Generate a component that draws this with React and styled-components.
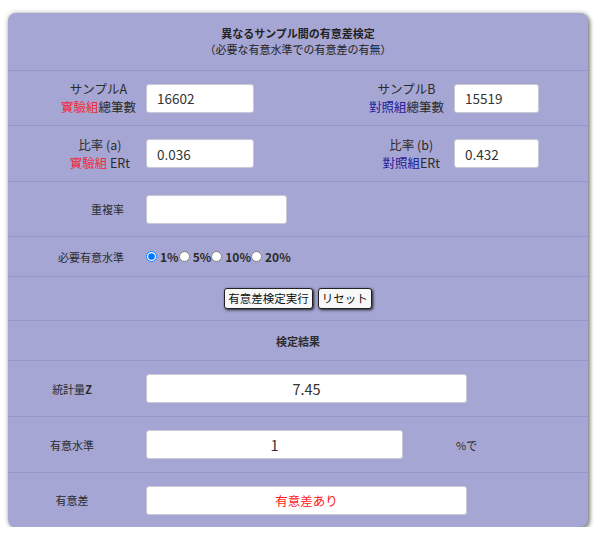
import React from "react";
import styled, { createGlobalStyle } from "styled-components";

const Global = createGlobalStyle`
  html, body { margin: 0; padding: 0; background: #ffffff; }
  body { font-family: "Noto Sans CJK JP", "Noto Sans", sans-serif; color: #2b2b2b; }
  * { box-sizing: border-box; }
`;

const Page = styled.div`
  padding: 13px 0 0 8px;
`;

const Card = styled.div`
  width: 580px;
  height: 514px;
  background: #a6a6d4;
  border-radius: 8px;
  box-shadow: 0 0 5px rgba(0, 0, 0, 0.25), 2px 2px 4px rgba(0, 0, 0, 0.45);
  overflow: hidden;
  display: flex;
  flex-direction: column;
`;

const Header = styled.div`
  height: 57px;
  padding-top: 12px;
  text-align: center;
  line-height: 16px;
  font-size: 11px;
  color: #222;
`;

const Title = styled.div`
  font-weight: bold;
`;

const Row = styled.div`
  height: ${(p) => p.$h}px;
  border-top: 1px solid #9898c8;
  display: flex;
  align-items: center;
  justify-content: ${(p) => (p.$center ? "center" : "flex-start")};
`;

const LabelCell = styled.div`
  width: ${(p) => p.$w}px;
  flex: none;
  display: flex;
  justify-content: ${(p) => (p.$align === "center" ? "center" : "flex-end")};
  padding-right: ${(p) => p.$pr}px;
  font-size: ${(p) => p.$fs || 11}px;
  font-weight: ${(p) => (p.$bold ? "bold" : "normal")};
  line-height: ${(p) => p.$lh || 16}px;
  text-align: center;
`;

const Red = styled.span`
  color: #f2283c;
`;

const Blue = styled.span`
  color: #20209a;
`;

const Strong = styled.b`
  font-weight: bold;
`;

const Field = styled.div`
  width: ${(p) => p.$w}px;
  height: 29px;
  flex: none;
  background: #ffffff;
  border: 1px solid #c9c9d6;
  border-radius: 3px;
  display: flex;
  align-items: center;
  justify-content: ${(p) => (p.$center ? "center" : "flex-start")};
  padding-left: ${(p) => (p.$center ? 0 : 10)}px;
  font-size: ${(p) => p.$fs || 13.5}px;
  color: ${(p) => p.$color || "#333"};
`;

const Radios = styled.div`
  display: flex;
  align-items: center;
  font-size: 12px;
  font-weight: bold;
`;

const Radio = styled.input`
  width: 11px;
  height: 11px;
  margin: 0 3px 0 0;
`;

const Button = styled.button`
  font-family: inherit;
  font-size: 11.5px;
  line-height: 17px;
  height: 21px;
  padding: 0 3px;
  color: #111;
  background: #f8f8f8;
  border: 1px solid #222;
  border-radius: 3px;
  box-shadow: 1px 1px 3px rgba(0, 0, 0, 0.85);
  margin: 0 2.5px;
`;

const Unit = styled.div`
  margin-left: 53px;
  font-size: 11px;
`;

export default function App() {
  return (
    <Page>
      <Global />
      <Card>
        <Header>
          <Title>異なるサンプル間の有意差検定</Title>
          <div>（必要な有意水準での有意差の有無）</div>
        </Header>

        <Row $h={55}>
          <LabelCell $w={138} $pr={10} $fs={12.5} $lh={18}>
            <div>
              サンプルA
              <br />
              <Red>實驗組</Red>總筆數
            </div>
          </LabelCell>
          <Field $w={108}>16602</Field>
          <LabelCell $w={200} $pr={10} $fs={12.5} $lh={18}>
            <div>
              サンプルB
              <br />
              <Blue>對照組</Blue>總筆數
            </div>
          </LabelCell>
          <Field $w={85}>15519</Field>
        </Row>

        <Row $h={56}>
          <LabelCell $w={138} $pr={16} $fs={12.5} $lh={18}>
            <div>
              比率 (a)
              <br />
              <Red>實驗組</Red> ERt
            </div>
          </LabelCell>
          <Field $w={108}>0.036</Field>
          <LabelCell $w={200} $pr={14} $fs={12.5} $lh={18}>
            <div>
              比率 (b)
              <br />
              <Blue>對照組</Blue>ERt
            </div>
          </LabelCell>
          <Field $w={85}>0.432</Field>
        </Row>

        <Row $h={55}>
          <LabelCell $w={138} $pr={22}>重複率</LabelCell>
          <Field $w={141} />
        </Row>

        <Row $h={40}>
          <LabelCell $w={138} $pr={22}>必要有意水準</LabelCell>
          <Radios>
            <Radio type="radio" name="lv" defaultChecked />
            1%
            <Radio type="radio" name="lv" />
            5%
            <Radio type="radio" name="lv" />
            10%
            <Radio type="radio" name="lv" />
            20%
          </Radios>
        </Row>

        <Row $h={44} $center>
          <Button>有意差検定実行</Button>
          <Button>リセット</Button>
        </Row>

        <Row $h={40} $center>
          <LabelCell $w={120} $pr={0} $align="center" $bold $fs={11}>
            検定結果
          </LabelCell>
        </Row>

        <Row $h={56}>
          <LabelCell $w={138} $pr={10} $align="center" $fs={11}>
            <span>
              統計量<Strong>Z</Strong>
            </span>
          </LabelCell>
          <Field $w={321} $center $fs={14.5}>7.45</Field>
        </Row>

        <Row $h={56}>
          <LabelCell $w={138} $pr={10} $align="center" $fs={11}>
            有意水準
          </LabelCell>
          <Field $w={257} $center $fs={14.5}>1</Field>
          <Unit>%で</Unit>
        </Row>

        <Row $h={55}>
          <LabelCell $w={138} $pr={10} $align="center" $fs={11}>
            有意差
          </LabelCell>
          <Field $w={321} $center $fs={12.5} $color="#ff1a1a">有意差あり</Field>
        </Row>
      </Card>
    </Page>
  );
}
